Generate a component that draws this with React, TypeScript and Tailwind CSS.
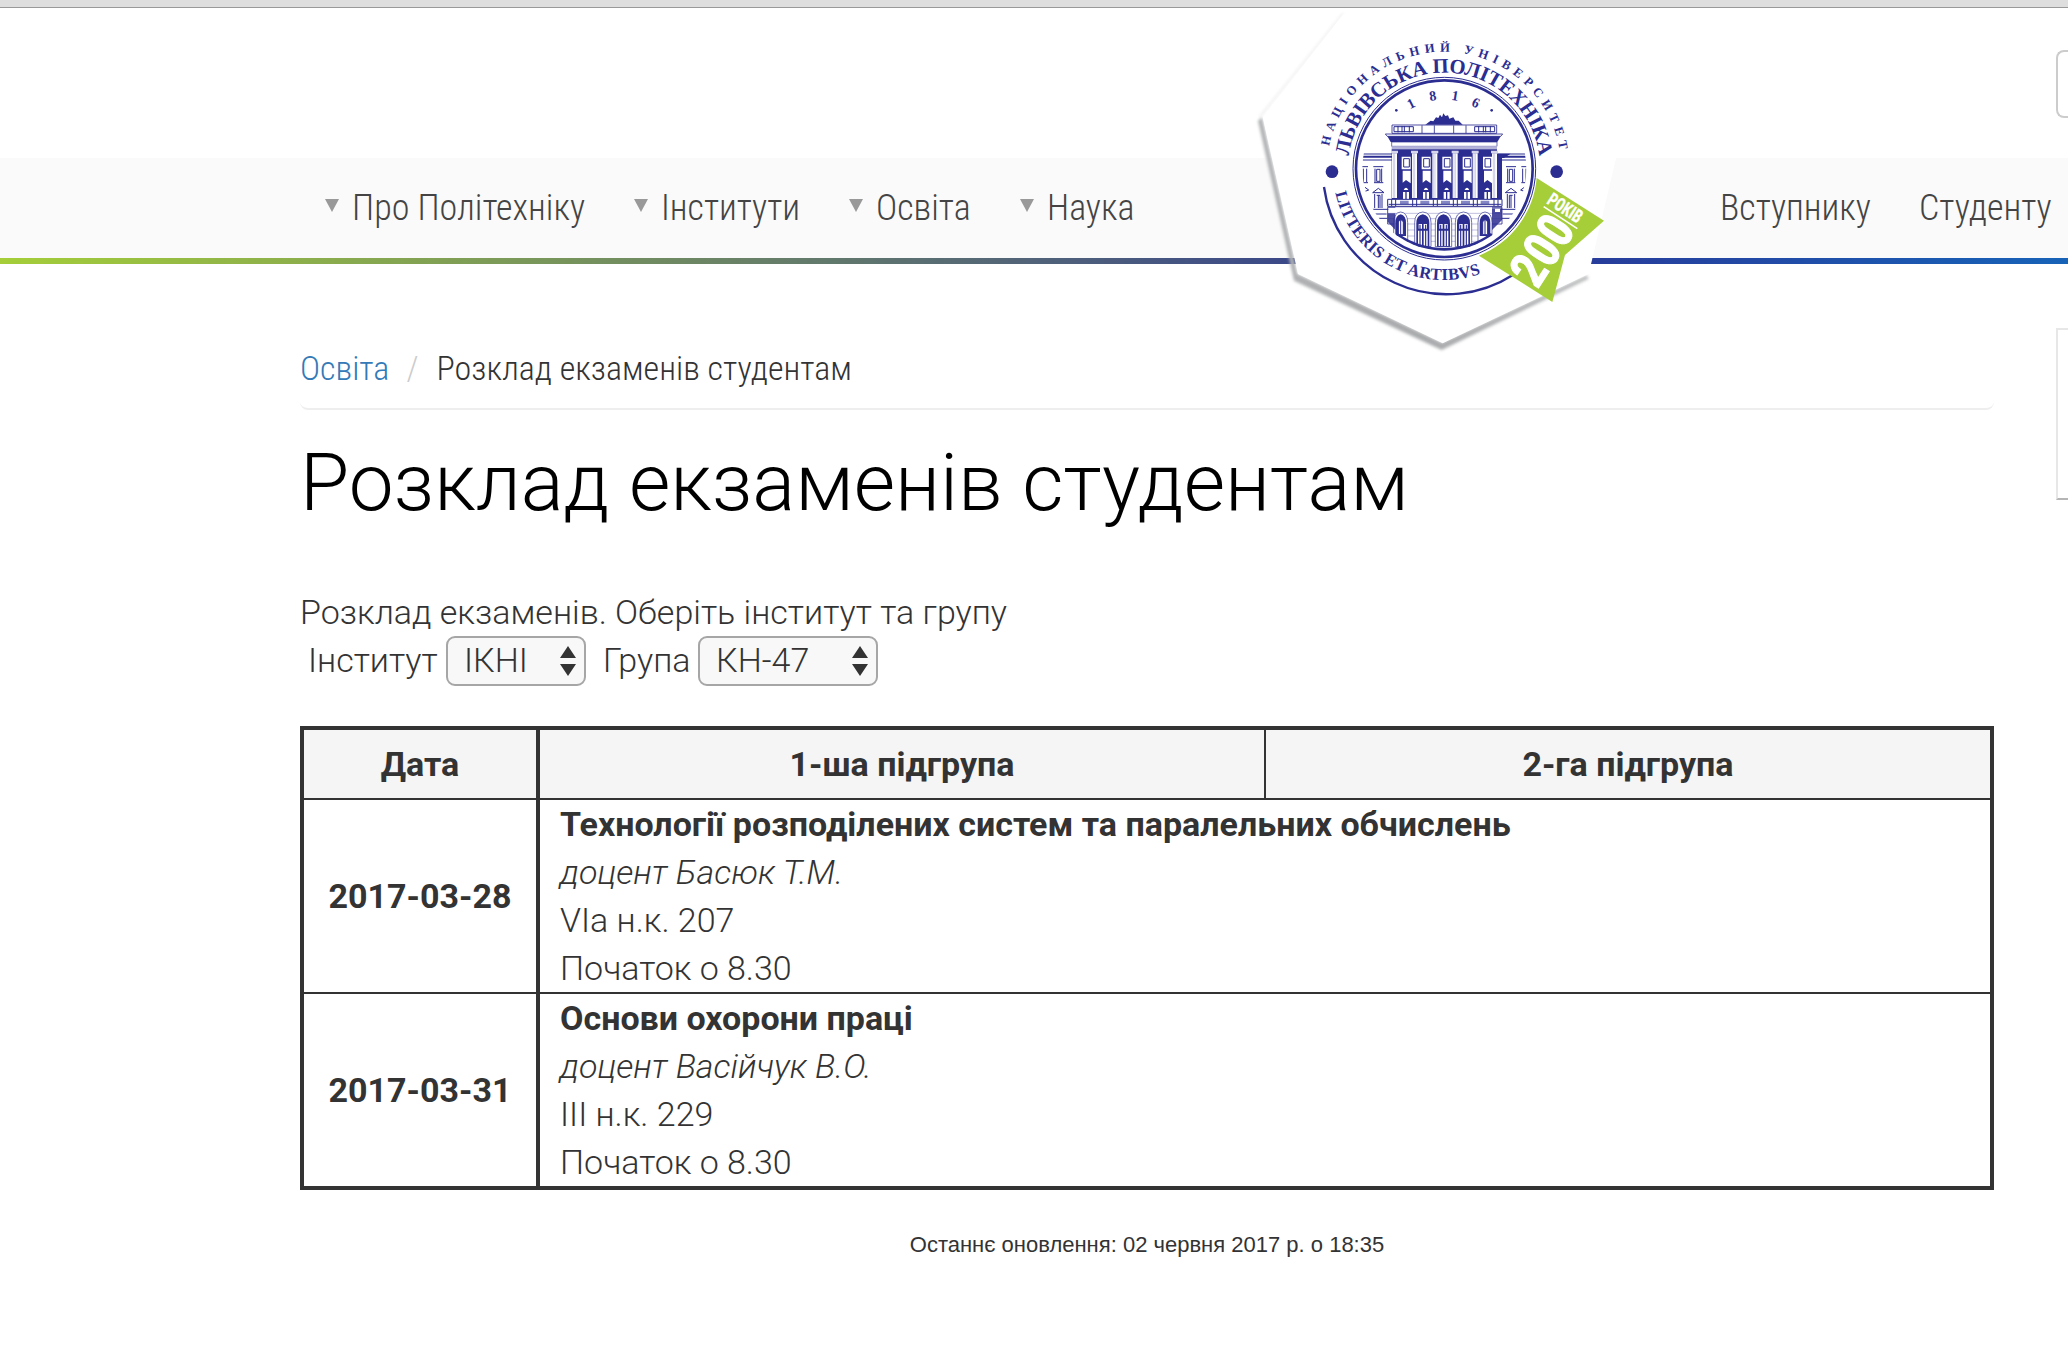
import React from "react";

const INK = "#2b2d91";

function CondensedText({ children, className = "" }: { children: React.ReactNode; className?: string }) {
  return <span className={"whitespace-nowrap font-stretch-75% " + className}>{children}</span>;
}

const bays = [470, 530, 592, 653, 714];
const arches = [465, 528, 590, 650, 718];

function Wing() {
  return (
    <g stroke={INK} fill="none" strokeWidth={3}>
      <path d="M368 462H456M368 480H456" />
      <path d="M368 470H456" strokeWidth={6} />
      <path d="M366 500H384M370 506V546M380 506V546M366 548H384" />
      <path d="M400 500H430M405 506V546M425 506V546M402 548H430M410 508H420V544H410Z" />
      <path d="M375 562L386 570L375 574" />
      <path d="M398 578L415 565L432 578ZM404 582V624M426 582V624M410 586H420V624M415 586V624" />
      <path d="M390 628H445M398 642H440M415 655H442" />
    </g>
  );
}

function Building() {
  return (
    <g>
      <path d="M556 374L572 362L580 364L588 352L595 354L600 344L606 352L610 340L616 348L624 346L628 356L640 352L646 362L656 362L668 374Z" fill={INK} />
      <g stroke={INK} strokeWidth={2.5} fill="none">
        <path d="M456 375H770V400H456Z" />
        <path d="M462 380H520V395H462ZM474 378V397M486 378V397M493 378V397M508 378V397M704 380H764V395H704ZM716 378V397M730 378V397M737 378V397M751 378V397" strokeWidth={3} />
        <path d="M546 376V400M583 376V400M641 376V400M678 376V400" />
        <path d="M436 402H788L782 409H442Z" />
      </g>
      <path d="M442 409H782L772 426H452Z" fill={INK} />
      <path d="M455 426H771V439H455Z" fill="#fff" stroke={INK} strokeWidth={2} />
      <path d="M455 439H771V448H455Z" fill="#b3b3da" />
      <path d="M455 448H771V598H455Z" fill={INK} />
      <path d="M771 461H812L792 474H786V598H771Z" fill={INK} />
      {[456, 516, 577, 638, 698, 756].map((x) => (
        <g key={x}>
          <path d={`M${x} 460H${x + 15}V594H${x}Z`} fill="#fff" />
          <path d={`M${x + 4} 460V594M${x + 8} 460V594`} stroke="#9c9dd0" strokeWidth={1.5} />
          <path d={`M${x - 3} 452H${x + 18}V460H${x - 3}Z`} fill="#d5d5ec" />
        </g>
      ))}
      {bays.map((x) => (
        <g key={x}>
          <path d={`M${x + 15} 470H${x + 42}V508H${x + 15}Z`} fill="#fff" />
          <path d={`M${x + 21} 476H${x + 38}V501H${x + 21}Z`} fill="#fff" stroke={INK} strokeWidth={3} />
          <path d={`M${x + 18} 512H${x + 42}V550L${x + 28} 540L${x + 18} 548Z`} fill="#fff" />
          <path d={`M${x + 15} 598V566Q${x + 28} 536 ${x + 41} 566V598Z`} fill={INK} />
          <path d={`M${x + 21} 570Q${x + 28} 556 ${x + 35} 570ZM${x + 19} 576H${x + 26}V598H${x + 19}ZM${x + 30} 576H${x + 37}V598H${x + 30}Z`} fill="#fff" />
        </g>
      ))}
      <path d="M443 598H786V619H443Z" fill="#fff" stroke={INK} strokeWidth={3} />
      <path d="M480 602H506V612H480ZM541 602H568V612H541ZM603 602H630V612H603ZM663 602H690V612H663ZM722 602H748V612H722Z" fill="#8587c5" />
      <path d="M446 613H784" stroke={INK} strokeWidth={3} />
      {[455, 518, 580, 640, 700, 762].map((x) => (
        <path key={x} d={`M${x} 598V618M${x + 12} 598V618`} stroke={INK} strokeWidth={3} />
      ))}
      <path d="M443 622H786V672H443Z" fill="#fff" stroke={INK} strokeWidth={2.5} />
      <path d="M466 622H756V740H466Z" fill="#fff" />
      <g stroke={INK} strokeWidth={1.5}>
        <path d="M443 640H786M443 656H786M466 672H756M466 690H756M466 708H756M480 724H740" opacity={0.6} />
      </g>
      {arches.map((x, i) => {
        const side = i === 0 || i === 4;
        const w = side ? 34 : 41;
        return (
          <g key={x}>
            <path d={`M${x - 4} 740V668Q${x - 4} 638 ${x + w / 2} 636Q${x + w + 4} 638 ${x + w + 4} 668V740Z`} fill="#fff" stroke={INK} strokeWidth={2} />
            <path d={`M${x + 1} ${side ? 708 : 740}V670Q${x + 1} 646 ${x + w / 2} 643Q${x + w - 1} 646 ${x + w - 1} 670V${side ? 708 : 740}Z`} fill={INK} />
            {side ? (
              <path d={`M${x + 10} 704V666Q${x + 17} 652 ${x + 25} 666V704ZM${x + 17} 660V704`} fill="#fff" stroke={INK} strokeWidth={3} />
            ) : (
              <path d={`M${x + 8} 672H${x + 18}V686H${x + 8}ZM${x + 23} 672H${x + 33}V686H${x + 23}ZM${x + 6} 692H${x + 18}V738H${x + 6}ZM${x + 23} 692H${x + 35}V738H${x + 23}Z`} fill="#fff" />
            )}
            {!side && <path d={`M${x + 12} 674V738M${x + 29} 674V738`} stroke={INK} strokeWidth={3.5} />}
          </g>
        );
      })}
      <path d="M443 640H466V690L443 665ZM756 625H786V660L756 690Z" fill={INK} opacity={0.85} />
      <path d="M449 626H462V636H449ZM765 626H780V636H765Z" fill="#fff" />
      <Wing />
      <g transform="translate(1228 0) scale(-1 1)">
        <Wing />
      </g>
    </g>
  );
}

function Logo() {
  return (
    <svg className="absolute left-[1240px] top-0 h-[360px] w-[380px] overflow-visible" viewBox="0 0 1140 1080" role="img" aria-label="Львівська політехніка">
      <defs>
        <filter id="soft" x="-20%" y="-20%" width="140%" height="140%">
          <feGaussianBlur stdDeviation="4" />
        </filter>
        <linearGradient id="edge" x1="0" y1="0" x2="1" y2="0">
          <stop offset="0" stopColor="#b0b2b4" />
          <stop offset="0.5" stopColor="#a8aaac" />
          <stop offset="1" stopColor="#bdbebf" />
        </linearGradient>
        <path id="ring-outer" d="M267.5 439A351 351 0 0 1 958.7 451" />
        <path id="ring-inner" d="M326.5 468.4A288 288 0 0 1 897.9 470.9" />
        <path id="ring-lower" d="M286 578.3A334 334 0 0 0 724.6 820.5" />
        <clipPath id="medal">
          <circle cx="613" cy="506" r="246" />
        </clipPath>
      </defs>
      <path d="M310 40L60 350" stroke="#efefef" strokeWidth={6} filter="url(#soft)" />
      <path d="M54 362L66 352L172 822L606 1028L1040 826L1046 836L605 1050L162 842Z" fill="url(#edge)" filter="url(#soft)" />
      <path d="M310 42L68 352L174 822L608 1030L1046 822L1160 340L900 42Z" fill="#fff" />

      <g fill={INK} className="font-['Liberation_Serif',serif] font-bold">
        <text fontSize="38">
          <textPath href="#ring-outer" textLength="978">НАЦІОНАЛЬНИЙ УНІВЕРСИТЕТ</textPath>
        </text>
        <text fontSize="62">
          <textPath href="#ring-inner" textLength="830">ЛЬВІВСЬКА ПОЛІТЕХНІКА</textPath>
        </text>
        <text fontSize="50">
          <textPath href="#ring-lower" textLength="564">LITTERIS ET ARTIBVS</textPath>
        </text>
        <g fontSize="42" textAnchor="middle">
          <text transform="translate(519 323) rotate(-27)">1</text>
          <text transform="translate(580 301) rotate(-9)">8</text>
          <text transform="translate(643 301) rotate(9)">1</text>
          <text transform="translate(702 321) rotate(24)">6</text>
        </g>
        <circle cx="469" cy="331" r="4" />
        <circle cx="755" cy="331" r="4" />
        <circle cx="276" cy="515" r="19" />
        <circle cx="950" cy="515" r="19" />
      </g>
      <path d="M252 561A371 371 0 0 0 820 824" fill="none" stroke={INK} strokeWidth={7} />
      <g fill="none" stroke={INK}>
        <circle cx="613" cy="506" r="274" strokeWidth={3} />
        <circle cx="613" cy="506" r="265" strokeWidth={8} />
      </g>
      <g clipPath="url(#medal)">
        <Building />
        <path d="M470 703A246 246 0 0 0 756 703" fill="none" stroke={INK} strokeWidth={10} />
      </g>

      <path d="M890 534L1092 662L975 765L937 906L717 767A276 276 0 0 0 890 534Z" fill="#a5ce39" />
      <g fill="#fff" className="font-[Roboto,sans-serif] font-bold font-stretch-75%">
        <text transform="translate(892 870) rotate(-57)" fontSize="154" textLength="216" lengthAdjust="spacingAndGlyphs" stroke="#fff" strokeWidth={3}>
          200
        </text>
        <text transform="translate(917 609) rotate(33)" fontSize="56" textLength="114" lengthAdjust="spacingAndGlyphs" stroke="#fff" strokeWidth={1}>
          РОКІВ
        </text>
        <path d="M911 620L1012 686" stroke="#fff" strokeWidth={5} />
      </g>
    </svg>
  );
}

function MenuItem({ label, width }: { label: string; width: string }) {
  return (
    <li className={"flex items-center " + width}>
      <svg className="mr-[13px] h-[13px] w-[14px] -translate-y-[3px]" viewBox="0 0 14 13">
        <path d="M0 0H14L7 13Z" fill="#999" />
      </svg>
      <CondensedText>{label}</CondensedText>
    </li>
  );
}

function Select({ value, className }: { value: string; className: string }) {
  return (
    <span className={"flex h-[50px] items-center justify-between rounded-[9px] border-2 border-[#a6a6a6] bg-[#f8f8f8] pl-4 pr-2 " + className}>
      <span className="pb-0.5">{value}</span>
      <svg className="h-[30px] w-4" viewBox="0 0 16 30" fill="#333">
        <path d="M0 12L8 0L16 12ZM0 18H16L8 30Z" />
      </svg>
    </span>
  );
}

const exams = [
  { date: "2017-03-28", subject: "Технології розподілених систем та паралельних обчислень", teacher: "доцент Басюк Т.М.", room: "VIа н.к. 207" },
  { date: "2017-03-31", subject: "Основи охорони праці", teacher: "доцент Васійчук В.О.", room: "III н.к. 229" },
];

export default function App() {
  return (
    <div className="relative h-[1350px] w-[2068px] overflow-hidden bg-white font-[Roboto,sans-serif] text-[34px] leading-[48px] font-light text-[#333]">
      <div className="h-2 border-b border-[#999] bg-[#dedede]" />
      <header className="flex h-[256px] flex-col">
        <div className="flex h-[150px] justify-end pt-[42px]">
          <div className="h-[68px] w-3 rounded-l-lg border-2 border-r-0 border-[#ccc]" />
        </div>
        <nav className="flex h-[100px] items-center justify-between bg-[#fafafa] pl-[325px] text-[36px] text-[#444]">
          <ul className="flex">
            <MenuItem label="Про Політехніку" width="w-[309px]" />
            <MenuItem label="Інститути" width="w-[215px]" />
            <MenuItem label="Освіта" width="w-[171px]" />
            <MenuItem label="Наука" width="w-[120px]" />
          </ul>
          <ul className="flex">
            <li className="w-[199px]"><CondensedText>Вступнику</CondensedText></li>
            <li className="w-[149px]"><CondensedText>Студенту</CondensedText></li>
          </ul>
        </nav>
        <div className="h-1.5 bg-linear-to-r/srgb from-[#a5ce39] via-[#2b3495] via-72% to-[#1763b8]" />
      </header>
      <Logo />

      <div className="flex justify-between pl-[300px]">
        <main className="w-[1694px]">
          <div className="flex h-[146px] items-end rounded-b-lg border-b-2 border-[#eee] pb-4">
            <CondensedText className="text-[#337ab7]">Освіта</CondensedText>
            <CondensedText className="pl-[17px] pr-[18px] text-[#ccc]">/</CondensedText>
            <CondensedText>Розклад екзаменів студентам</CondensedText>
          </div>
          <h1 className="mt-[29px] text-[80px] leading-[88px] text-black">Розклад екзаменів студентам</h1>
          <p className="mt-[61px]">Розклад екзаменів. Оберіть інститут та групу</p>
          <div className="flex h-[50px] items-center pl-2">
            <span className="w-[138px] pb-0.5">Інститут</span>
            <Select value="ІКНІ" className="w-[140px]" />
            <span className="ml-[17px] w-[95px] pb-0.5">Група</span>
            <Select value="КН-47" className="w-[180px]" />
          </div>
          <div className="mt-[40px] border-4 border-[#333]">
            <div className="flex h-[70px] items-center border-b-2 border-[#333] bg-[#f5f5f5] text-center font-bold">
              <div className="flex h-full w-[236px] items-center justify-center border-r-4 border-[#333]">Дата</div>
              <div className="flex h-full w-[726px] items-center justify-center border-r-2 border-[#333]">1-ша підгрупа</div>
              <div className="flex-1">2-га підгрупа</div>
            </div>
            {exams.map((e) => (
              <div key={e.date} className="flex h-[194px] border-b-2 border-[#333] last:h-[192px] last:border-b-0">
                <div className="flex w-[236px] items-center justify-center border-r-4 border-[#333] font-bold">{e.date}</div>
                <div className="pl-5">
                  <p className="font-bold">{e.subject}</p>
                  <p className="italic">{e.teacher}</p>
                  <p>{e.room}</p>
                  <p>Початок о 8.30</p>
                </div>
              </div>
            ))}
          </div>
          <p className="mt-[31px] text-center font-['Liberation_Sans',sans-serif] text-[22px] font-normal">Останнє оновлення: 02 червня 2017 р. о 18:35</p>
        </main>
        <aside className="mt-16 h-[172px] w-3 border-2 border-r-0 border-[#e7e7e7] border-b-[#b5b5b5]" />
      </div>
    </div>
  );
}
